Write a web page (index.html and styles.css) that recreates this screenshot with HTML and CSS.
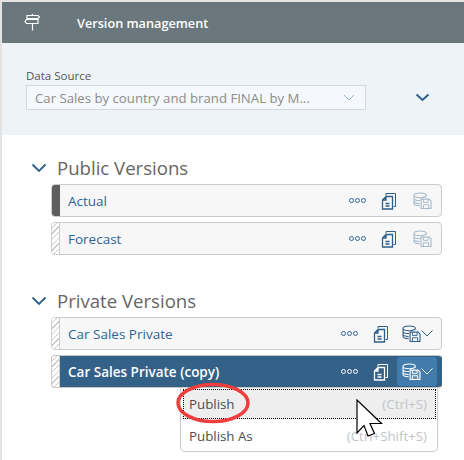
FILE: index.html
```html
<!DOCTYPE html>
<html>
  <head>
    <title>Version management</title>
    <link rel="stylesheet" href="styles.css">
  </head>
  <body>
    <svg width="0" height="0" class="defs">
      <symbol id="copy" viewBox="0 0 16 18">
        <path d="M5 3.500V1.500H14.500V14.500H12.500" fill="none" stroke="currentColor"/>
        <path d="M5 4.500H11.500V17H1.500V8ZM2 8H5V5M4.500 11.500H8.500M4.500 14H8.500" fill="none" stroke="currentColor" stroke-width="1.300"/>
      </symbol>
      <symbol id="save" viewBox="0 0 20 18">
        <path d="M14 5V3.500C14 2 11 1 7.500 1S1 2 1 3.500V12C1 13.500 3.500 14.500 7 14.500M1 6.500C1 8 4 9 7.500 9M1 9.800C1 11.300 3.500 12 7 12.300M1 3.500C1 5 4 6 7.500 6S14 5 14 3.500" fill="none" stroke="currentColor" stroke-width="1.100"/>
        <path d="M8.500 7.500H17L19 9.500V17.500H8.500Z" fill="#fff" fill-opacity=".15" stroke="currentColor" stroke-width="1.200"/>
        <path d="M11 8V11H16V8M11 17V13.500H16.500V17" fill="none" stroke="currentColor"/>
      </symbol>
    </svg>

    <div class="page">
      <div class="header">
        <svg class="header-icon" width="17" height="17" viewBox="0 0 17 17">
          <path d="M8.500 0V1.500M8.500 9.500V16.500M3 1.500H14L15.500 3L14 4.500H3ZM6 4.500V5.500M2.500 5.500H14V9.500H2.500L1 7.500Z" fill="none" stroke="#fff" stroke-width="1.200"/>
        </svg>
        <span class="header-title">Version management</span>
      </div>

      <div class="source">
        <div class="source-field">
          <div class="source-label">Data Source</div>
          <div class="select">
            <span>Car Sales by country and brand FINAL by M...</span>
            <svg width="12" height="7" viewBox="0 0 12 7"><path d="M1 1L6 6L11 1" fill="none" stroke="#9db6cf"/></svg>
          </div>
        </div>
        <svg class="source-toggle" width="15" height="9" viewBox="0 0 15 9"><path d="M1.500 1.500L7.500 7L13.500 1.500" fill="none" stroke="#2f5f8a" stroke-width="2"/></svg>
      </div>

      <div class="group group-public">
        <div class="group-title">
          <svg width="16" height="10" viewBox="0 0 16 10"><path d="M1.500 1.500L8 8L14.500 1.500" fill="none" stroke="#2f5f8a" stroke-width="1.800"/></svg>
          <span>Public Versions</span>
        </div>
        <div class="row">
          <div class="row-mark solid"></div>
          <div class="row-name">Actual</div>
          <div class="dots"><i></i><i></i><i></i></div>
          <svg class="ico"><use href="#copy"/></svg>
          <svg class="ico-save off"><use href="#save"/></svg>
        </div>
        <div class="row">
          <div class="row-mark"></div>
          <div class="row-name">Forecast</div>
          <div class="dots"><i></i><i></i><i></i></div>
          <svg class="ico"><use href="#copy"/></svg>
          <svg class="ico-save off"><use href="#save"/></svg>
        </div>
      </div>

      <div class="group group-private">
        <div class="group-title">
          <svg width="16" height="10" viewBox="0 0 16 10"><path d="M1.500 1.500L8 8L14.500 1.500" fill="none" stroke="#2f5f8a" stroke-width="1.800"/></svg>
          <span>Private Versions</span>
        </div>
        <div class="row">
          <div class="row-mark"></div>
          <div class="row-name">Car Sales Private</div>
          <div class="dots"><i></i><i></i><i></i></div>
          <svg class="ico"><use href="#copy"/></svg>
          <div class="save-btn">
            <svg class="ico-save"><use href="#save"/></svg>
            <svg width="12" height="7" viewBox="0 0 12 7"><path d="M.5 .5L6 6L11.500 .5" fill="none" stroke="currentColor"/></svg>
          </div>
        </div>
        <div class="row selected">
          <div class="row-mark"></div>
          <div class="row-name">Car Sales Private (copy)</div>
          <div class="dots"><i></i><i></i><i></i></div>
          <svg class="ico"><use href="#copy"/></svg>
          <div class="save-btn">
            <svg class="ico-save"><use href="#save"/></svg>
            <svg width="12" height="7" viewBox="0 0 12 7"><path d="M.5 .5L6 6L11.500 .5" fill="none" stroke="currentColor"/></svg>
          </div>
        </div>
      </div>

      <div class="menu">
        <div class="menu-item focused"><span>Publish</span><span class="shortcut">(Ctrl+S)</span></div>
        <div class="menu-item"><span>Publish As</span><span class="shortcut">(Ctrl+Shift+S)</span></div>
      </div>

      <svg class="ring" width="76" height="44" viewBox="0 0 76 44">
        <ellipse cx="38" cy="22" rx="35" ry="18.500" fill="none" stroke="#ee3e3e" stroke-width="3.500"/>
      </svg>
      <svg class="cursor" width="28" height="40" viewBox="0 0 28 40">
        <path d="M1 1V34L8 26.500L12 37L18.500 34.500L14 24.500H25.500Z" fill="#fff" stroke="#000" stroke-width="1.200"/>
      </svg>
    </div>
  </body>
</html>
```

FILE: styles.css
```css
body {
  margin: 0;
  font-family: "Open Sans", Arial, sans-serif;
  background: #fff;
}

.defs {
  position: absolute;
}

.page {
  position: relative;
  width: 462px;
  height: 458px;
  padding-top: 2px;
  padding-left: 2px;
  background: linear-gradient(#e3e3e3, #e3e3e3) left / 2px 100% no-repeat,
    linear-gradient(#e3e3e3, #e3e3e3) top / 100% 2px no-repeat;
  overflow: hidden;
}

.header {
  display: flex;
  align-items: center;
  height: 41px;
  background: #6a777c;
  color: #fff;
}

.header-icon {
  margin-left: 22px;
}

.header-title {
  margin-left: 36px;
  font-size: 12.7px;
  font-weight: 600;
  padding-top: 1px;
}

.source {
  display: flex;
  align-items: flex-end;
  height: 92px;
  background: #eef3f8;
  padding-left: 24px;
  box-sizing: border-box;
  padding-bottom: 25px;
}

.source-label {
  font-size: 11.5px;
  color: #555;
  line-height: 14px;
  margin-bottom: 2px;
}

.select {
  display: flex;
  align-items: center;
  justify-content: space-between;
  box-sizing: border-box;
  width: 340px;
  height: 25px;
  padding: 0 10px 0 8px;
  border: 1px solid #d5d9dd;
  background: #f5f8fc;
  color: #8c8c8c;
  font-size: 13.2px;
}

.source-toggle {
  margin-left: 49px;
  margin-bottom: 8px;
}

.group {
  padding-left: 49px;
  width: 391px;
}

.group-public {
  padding-top: 20px;
}

.group-private {
  padding-top: 28px;
}

.group-title {
  display: flex;
  align-items: center;
  height: 26px;
  margin-bottom: 3px;
  margin-left: -20px;
  gap: 10px;
  color: #666;
  font-size: 18.6px;
}

.group-title span {
  padding-bottom: 2px;
}

.row {
  display: flex;
  align-items: center;
  box-sizing: border-box;
  height: 33px;
  margin-bottom: 5px;
  border: 1px solid #ccc;
  border-radius: 4px;
  background: #f7f7f7;
  color: #2f6497;
  overflow: hidden;
}

.row-mark {
  flex: none;
  align-self: stretch;
  width: 7px;
  border-right: 1px solid #ccc;
  background: repeating-linear-gradient(135deg, #fff 0 3px, #c8c8c8 3px 4px);
}

.row-mark.solid {
  background: #5e5e5e;
  border-right: none;
  width: 8px;
}

.row-name {
  flex: 1;
  padding-left: 8px;
  font-size: 13.5px;
}

.dots {
  display: flex;
  gap: 1px;
  margin-right: 15px;
}

.dots i {
  box-sizing: border-box;
  width: 5px;
  height: 5px;
  border: 1px solid currentColor;
  border-radius: 50%;
}

.ico {
  width: 16px;
  height: 18px;
  margin-right: 16px;
  color: #2f5f8a;
}

.ico-save {
  width: 19px;
  height: 17px;
  color: #2f5f8a;
}

.ico-save.off {
  opacity: 0.4;
  margin-right: 9px;
}

.save-btn {
  display: flex;
  align-items: center;
  height: 29px;
  width: 40px;
  margin-left: -8px;
  margin-right: 4px;
  padding-left: 5px;
  box-sizing: border-box;
  color: #2f5f8a;
  border-radius: 3px;
}

.row.selected {
  background: #346187;
  border-color: #c8c8c8 #346187 #c8c8c8 #ccc;
  color: #fff;
  margin-bottom: 0;
}

.row.selected .row-name {
  font-weight: 600;
}

.row.selected .row-mark {
  background-color: #fff;
}

.row.selected .ico,
.row.selected .ico-save {
  color: #fff;
}

.row.selected .save-btn {
  background: #427cad;
  color: #fff;
}

.menu {
  position: absolute;
  left: 180px;
  top: 388px;
  box-sizing: border-box;
  width: 258px;
  height: 64px;
  padding: 1px 1px 0 2px;
  border: 1px solid #ccc;
  border-top: none;
  border-radius: 0 0 5px 5px;
  background: #fff;
  font-size: 13.3px;
  color: #4d4d4d;
}

.menu-item {
  display: flex;
  justify-content: space-between;
  align-items: center;
  height: 32px;
  padding: 0 9px 0 6px;
}

.menu-item.focused {
  height: 30px;
  background: #eeeeee;
  outline: 1px dotted #000;
  outline-offset: -1px;
  margin-bottom: 1px;
}

.shortcut {
  color: #bfc5ca;
}

.ring {
  position: absolute;
  left: 175px;
  top: 381px;
}

.cursor {
  position: absolute;
  left: 356px;
  top: 399px;
}
```
